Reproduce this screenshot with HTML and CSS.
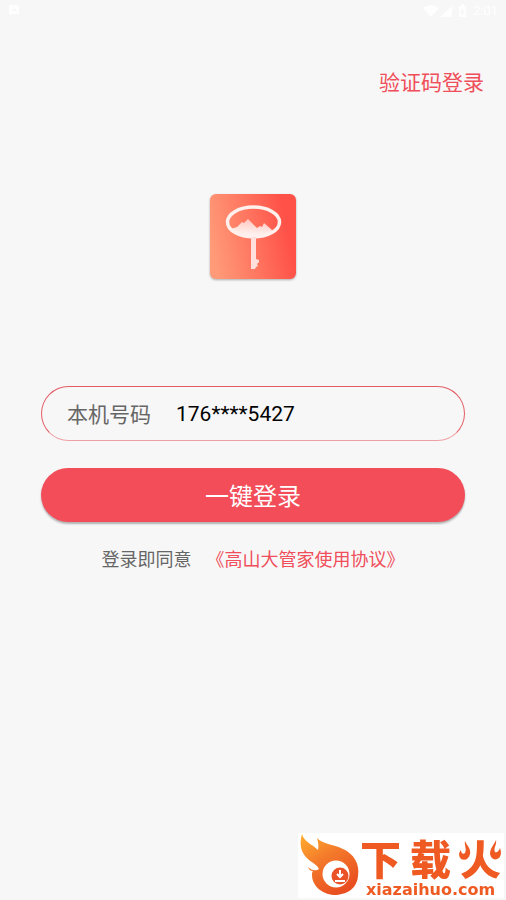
FILE: index.html
```html
<!DOCTYPE html>
<html lang="zh-CN">
<head>
<meta charset="utf-8">
<meta name="viewport" content="width=device-width, initial-scale=1">
<title>一键登录</title>
<link rel="stylesheet" href="styles.css">
</head>
<body>
<div class="status">
  <svg class="notice" width="12" height="12" viewBox="0 0 12 12" aria-hidden="true"><path fill="#fff" fill-rule="evenodd" d="M2 1h8q1 0 1 1v7q0 1-1 1H4l-2 1-1-1V2q0-1 1-1zm1 6h6L7 4 6 6 5 5z"/></svg>
  <div class="system">
    <svg width="46" height="14" viewBox="0 0 46 14" aria-hidden="true"><path fill="#fff" d="M0 4Q8-2 16 4L8 13zM17 13 29 2V13zM36 2h2V0h3v2h2v11h-7z"/><path fill="#f7f7f7" d="m40 4-3 5h2v3l3-5h-2z"/></svg>
    <span>2:01</span>
  </div>
</div>
<header class="top"><a href="#code">验证码登录</a></header>
<main>
  <svg class="logo" viewBox="0 0 86 86" role="img" aria-label="高山大管家">
    <defs>
      <linearGradient id="coral" x1="0" y1=".6" x2="1" y2=".4"><stop stop-color="#ff9b78"/><stop offset=".45" stop-color="#ff7861"/><stop offset=".9" stop-color="#ff5148"/></linearGradient>
      <linearGradient id="peak" x1="0" y1="0" x2="0" y2="1"><stop stop-color="#fff" stop-opacity=".6"/><stop offset="1" stop-color="#fff"/></linearGradient>
      <clipPath id="head"><ellipse cx="43.500" cy="28" rx="26" ry="15"/></clipPath>
    </defs>
    <rect width="86" height="85" rx="6" fill="url(#coral)"/>
    <path clip-path="url(#head)" fill="url(#peak)" d="M17 36 27 33 32 28 34 29 38 25 47 34 50 32 52 33 54 29 62 36 57 46H29z"/>
    <ellipse cx="43.500" cy="28" rx="26" ry="15" fill="none" stroke="#fff0ed" stroke-width="3.500"/>
    <path fill="#ffe0dc" d="M41 43h5v22l3 1v2l-2 2 1 2-2 1-1 2h-4z"/>
  </svg>
  <form class="login">
    <div class="field">
      <label for="phone">本机号码</label>
      <input id="phone" type="text" value="176****5427" readonly>
    </div>
    <button type="button">一键登录</button>
  </form>
  <p class="terms"><span>登录即同意</span><a href="#terms">《高山大管家使用协议》</a></p>
</main>
<aside class="watermark">
  <svg class="flame" width="60" height="66" viewBox="0 0 60 66" aria-hidden="true">
    <defs><linearGradient id="fire" x1="0" y1="0" x2=".6" y2="1"><stop stop-color="#ffb02e"/><stop offset=".45" stop-color="#f47b2b"/><stop offset="1" stop-color="#e94f20"/></linearGradient></defs>
    <path fill="url(#fire)" d="M2 1C4 9 12 11 18 17C19 13 18 9 17 5C22 11 33 11 43 16C54 21 60 31 58 43C57 56 46 62 34 62C21 61 12 52 12 42C12 40 12 39 13 38C11 38 9 37 8 34C12 38 16 38 19 36C17 30 3 27 1 14C0 9 1 5 2 1z"/>
    <circle cx="36" cy="41" r="13.500" fill="#fff"/><circle cx="40" cy="43" r="8.500" fill="#e95327"/>
    <path d="M40 37v7m-3-3 3 3 3-3M35 48h10" stroke="#fff" stroke-width="2" fill="none"/>
  </svg>
  <div class="brand">
    <div class="brand-name"><span>下</span><span>载</span><span class="fire">火<svg class="sparks" width="44" height="22" viewBox="0 0 44 22" aria-hidden="true"><path fill="#fff" d="M0 0H15V22H0zM28 0H44V22H28z"/><path fill="#ee5a22" d="M6 1C8 6 12 8 11 14C10 19 6 21 2 19C-1 16 0 12 2 10C2 13 4 15 6 13C8 9 5 5 6 1zM37 0C35 5 31 8 31 14C32 19 36 21 40 18C43 14 42 11 41 8C40 11 38 13 36 12C34 8 38 5 37 0z"/></svg></span></div>
    <div class="brand-url">xiazaihuo.com</div>
  </div>
</aside>
</body>
</html>
```
FILE: styles.css
```css
* { box-sizing: border-box; }
body {
  margin: 0;
  min-height: 100vh;
  background: #f7f7f7;
  color: #666;
  font-family: Roboto, "Noto Sans CJK SC", sans-serif;
}
a { color: #ef4e5a; text-decoration: none; }
.status {
  display: flex;
  justify-content: space-between;
  height: 22px;
  padding: 4px 8px;
  opacity: .9;
}
.system {
  display: flex;
  align-items: center;
  gap: 4px;
  color: #fff;
  font-size: 13px;
  line-height: 14px;
}
.top {
  padding: 45px 22px 0;
  text-align: right;
  font-size: 21px;
  line-height: 32px;
}
main { padding: 95px 41px 0; }
.logo {
  display: block;
  width: 86px;
  height: 86px;
  margin: 0 auto;
  filter: drop-shadow(0 1px 1px rgba(0, 0, 0, .3));
}
.login {
  display: grid;
  gap: 27px;
  margin-top: 106px;
}
.field {
  display: flex;
  align-items: center;
  gap: 25px;
  height: 55px;
  padding: 0 25px 2px;
  border: 1px solid #e35c65;
  border-bottom-color: #f0a0a4;
  border-radius: 28px;
  font-size: 21px;
}
.field label { flex: none; }
.field input {
  flex: 1;
  min-width: 0;
  padding: 2px 0 0;
  border: 0;
  outline: 0;
  background: none;
  color: #000;
  font: inherit;
}
button {
  height: 54px;
  padding: 0 0 2px;
  border: 0;
  border-radius: 27px;
  background: #f24d59;
  box-shadow: 0 2px 2px rgba(0, 0, 0, .28);
  color: #fff;
  font: inherit;
  font-size: 24px;
}
.terms {
  display: flex;
  justify-content: center;
  gap: 15px;
  margin: 24px 0 0;
  font-size: 18px;
  line-height: 28px;
}
.watermark {
  position: fixed;
  right: 2px;
  bottom: 2px;
  display: flex;
  width: 206px;
  height: 65px;
  padding-left: 2px;
  background: #fff;
  color: #ee5a22;
}
.flame { flex: none; }
.brand { flex: 1; }
.brand-name {
  display: flex;
  justify-content: space-between;
  padding-right: 3px;
  margin-top: 4px;
  font: 900 41px/40px "Noto Sans CJK SC", sans-serif;
}
.brand-url {
  padding: 4px 0 0 6px;
  font: bold 16px/18px "DejaVu Sans", sans-serif;
}
.fire { position: relative; }
.sparks {
  position: absolute;
  top: 3px;
  left: -1px;
}
```
